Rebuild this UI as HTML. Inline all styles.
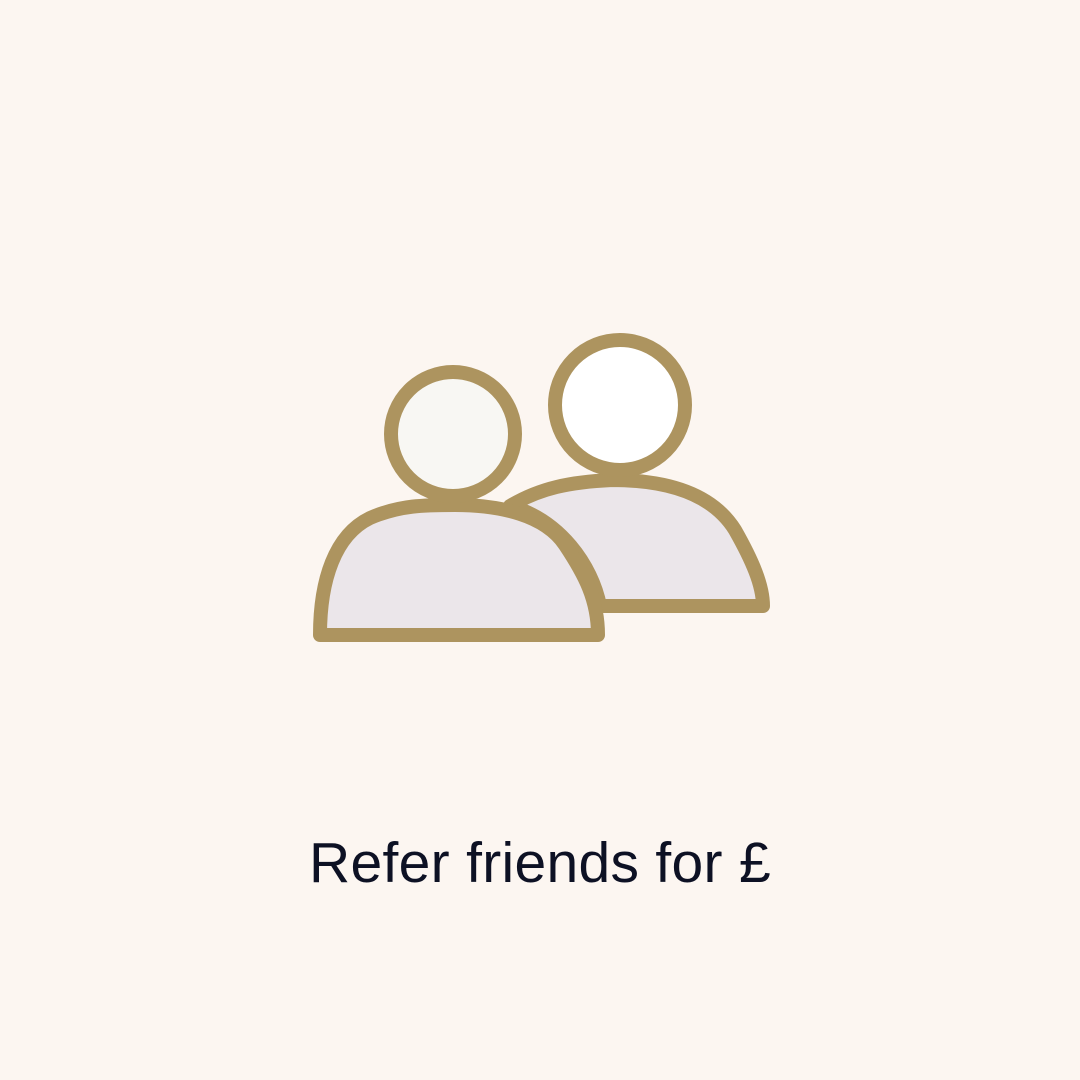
<!DOCTYPE html>
<html><head><style>
html,body{margin:0;padding:0;width:1080px;height:1080px;background:#fcf6f1;overflow:hidden}
.t{position:absolute;left:0;width:1080px;top:826px;text-align:center;font-family:"Liberation Sans",sans-serif;font-size:57px;letter-spacing:0.3px;color:#0d1124;line-height:74px}
svg{position:absolute;left:0;top:0}
</style></head><body>
<svg width="1080" height="1080" viewBox="0 0 1080 1080">
<g stroke="#ad945f" stroke-width="14" stroke-linejoin="round">
<path d="M510,506 C540,488 570,482 612,480 C660,480 710,490 735,530 C752,560 763,585 763,606 L600,606 C592,565 560,520 510,506 Z" fill="#ebe6ea"/>
<circle cx="620" cy="405" r="65" fill="#ffffff"/>
<path d="M320,635 C320,580 335,535 370,518 C400,505 425,505 455,505 C500,505 545,515 565,545 C585,575 598,600 598,635 Z" fill="#ebe6ea"/>
<circle cx="453" cy="434" r="62" fill="#f8f7f3"/>
</g>
</svg>
<div class="t">Refer friends for £</div>
</body></html>
